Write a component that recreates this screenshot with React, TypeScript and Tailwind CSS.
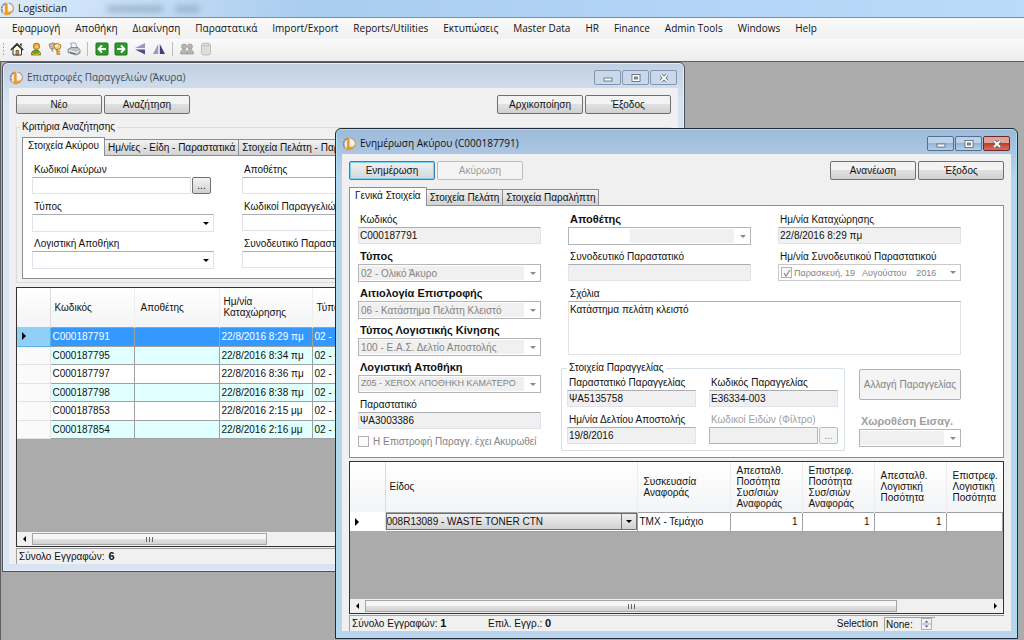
import type { ReactNode } from "react"
import clsx from "clsx"

const menuItems = [
  "Εφαρμογή",
  "Αποθήκη",
  "Διακίνηση",
  "Παραστατικά",
  "Import/Export",
  "Reports/Utilities",
  "Εκτυπώσεις",
  "Master Data",
  "HR",
  "Finance",
  "Admin Tools",
  "Windows",
  "Help",
]

const returns = [
  { code: "C000187791", date: "22/8/2016 8:29 πμ" },
  { code: "C000187795", date: "22/8/2016 8:34 πμ" },
  { code: "C000187797", date: "22/8/2016 8:36 πμ" },
  { code: "C000187798", date: "22/8/2016 8:38 πμ" },
  { code: "C000187853", date: "22/8/2016 2:15 μμ" },
  { code: "C000187854", date: "22/8/2016 2:16 μμ" },
]

function Logo() {
  return (
    <svg viewBox="0 0 14 14" className="h-3.5 w-3.5 shrink-0">
      <circle cx="7.5" cy="7" r="5.500" fill="#f4f1ee" />
      <path d="M4.500 2C1.500 3.600.8 8 3 11" fill="none" stroke="#85868e" strokeWidth="1.800" strokeDasharray="2.400 .7" />
      <path d="M8.500 1.200c4.400.2 6 4.800 4.200 8" fill="none" stroke="#b9a595" strokeWidth="1.300" />
      <path d="M4.300 1.200c1.700-.6 3 0 3 1.400v7.200c1.700.7 3.600.4 5.500-1.300-.7 3-3.600 5-7.600 4.300-.9-.1-1.500-.5-1.300-1 .9-.7 1.300-1.300 1.300-2.300V3.200c0-1-.3-1.500-.9-2z" fill="#f0a01e" stroke="#c9731a" strokeWidth=".4" />
    </svg>
  )
}

function Arrow({ muted }: { muted?: boolean }) {
  return (
    <svg viewBox="0 0 6 3" className={clsx("pointer-events-none mr-1 h-[3px] w-1.5 shrink-0", muted ? "fill-[#8a8a8a]" : "fill-black")}>
      <path d="M0 0h6L3 3z" />
    </svg>
  )
}

interface ButtonProps {
  children: ReactNode
  disabled?: boolean
  primary?: boolean
}

function Button({ children, disabled, primary }: ButtonProps) {
  return (
    <button
      disabled={disabled}
      className={clsx(
        "h-[19px] w-[86px] rounded-[2px] border text-center leading-none",
        disabled && "border-[#b9bdbf] bg-[#f4f4f4] text-[#9a9a9a]",
        primary && "border-[#3c7fb1] bg-linear-to-b from-[#f0f0f0] to-[#d3d8da] inset-ring inset-ring-[#7fd0ec]",
        !disabled && !primary && "border-[#707070] bg-linear-to-b from-[#f3f3f3] from-45% via-[#e0e0e0] via-50% to-[#d0d0d0]",
      )}
    >
      {children}
    </button>
  )
}

function WindowButtons({ active }: { active?: boolean }) {
  const base = clsx(
    "flex h-[15px] w-[27px] items-center justify-center rounded-[2px] border",
    active ? "border-[#55708f] bg-linear-to-b from-[#bcd2ea] from-45% via-[#94b4d6] via-50% to-[#b4d0ea]" : "border-[#8296b0] bg-[#c9d8ea]",
  )
  return (
    <div className="flex gap-px">
      <button aria-label="Minimize" className={base}>
        <svg viewBox="0 0 10 8" className="h-2 w-2.5">
          <rect x="1" y="4" width="8" height="3" fill="#fff" stroke="#56606e" strokeWidth=".8" />
        </svg>
      </button>
      <button aria-label="Maximize" className={base}>
        <svg viewBox="0 0 10 8" className="h-2 w-2.5">
          <rect x="1" y=".5" width="8" height="7" fill="#fff" stroke="#56606e" strokeWidth=".8" />
          <rect x="3.500" y="3" width="3" height="2" fill="#9ab" stroke="#56606e" strokeWidth=".8" />
        </svg>
      </button>
      <button
        aria-label="Close"
        className={active ? "flex h-[15px] w-[27px] items-center justify-center rounded-[2px] border border-[#6b2a2a] bg-linear-to-b from-[#e0a398] from-45% via-[#c23b28] via-50% to-[#d4705a]" : base}
      >
        <svg viewBox="0 0 10 8" className="h-2 w-2.5">
          <path d="M2 1l6 6M8 1L2 7" stroke="#56606e" strokeWidth="3.400" />
          <path d="M2 1l6 6M8 1L2 7" stroke="#fff" strokeWidth="1.900" />
        </svg>
      </button>
    </div>
  )
}

function Tabs({ tabs }: { tabs: string[] }) {
  return (
    <div role="tablist" className="flex h-[18px] items-end whitespace-nowrap">
      {tabs.map((tab, i) => (
        <button
          key={tab}
          role="tab"
          aria-selected={i === 0}
          className={clsx(
            "shrink-0 border border-[#8c8e94] leading-none",
            i === 0 ? "z-10 -mb-px h-[19px] border-b-0 bg-white px-[5px] pb-0.5" : "h-4 border-b-0 border-l-0 bg-linear-to-b from-[#f2f2f2] to-[#d2d2d2] px-[3px]",
          )}
        >
          {tab}
        </button>
      ))}
    </div>
  )
}

interface FieldProps {
  label: string
  value?: string
  bold?: boolean
  disabled?: boolean
  readOnly?: boolean
  compact?: boolean
  masked?: boolean
}

const labelText = "flex h-3.5 items-center pl-0.5 whitespace-nowrap"

function TextField({ label, value = "", disabled, readOnly }: FieldProps) {
  return (
    <label className="block h-[37px] min-w-0">
      <span className={clsx(labelText, disabled && "text-[#a0a0a0]")}>{label}</span>
      <input
        type="text"
        defaultValue={value}
        disabled={disabled}
        readOnly={readOnly}
        className={clsx(
          "mt-px block h-[17px] w-full border border-[#e2e3ea] border-t-[#abadb3] px-px",
          disabled || readOnly ? "bg-[#f0f0f0]" : "bg-white",
        )}
      />
    </label>
  )
}

function SelectField({ label, value = "", bold, disabled, compact, masked }: FieldProps) {
  return (
    <label className="block h-[37px] min-w-0">
      <span className={clsx(labelText, bold && "text-[11px] font-bold")}>{label}</span>
      <span className={clsx("mt-px flex h-[18px] items-center border bg-white", disabled ? "border-[#b5b5b5] text-[#838383]" : "border-[#e2e3ea] border-t-[#abadb3]")}>
        <select
          disabled={disabled}
          className={clsx(
            "mr-1.5 h-3.5 min-w-0 flex-1 appearance-none pl-0.5 whitespace-nowrap opacity-100",
            compact && "text-[9px]",
            masked && "bg-linear-to-r from-white from-[61px] to-[#f0f0f0] to-[61px]",
            disabled && !masked && "bg-[#f0f0f0]",
          )}
        >
          <option className="whitespace-nowrap">{value}</option>
        </select>
        <Arrow muted={disabled} />
      </span>
    </label>
  )
}

function PickerField({ label, disabled }: FieldProps) {
  return (
    <div className="h-[37px] min-w-0">
      <label htmlFor={label} className={clsx(labelText, disabled && "text-[#a0a0a0]")}>
        {label}
      </label>
      <div className={clsx("mt-px flex", !disabled && "pr-[3px]")}>
        <input id={label} disabled={disabled} className={clsx("h-[17px] min-w-0 flex-1 border px-px", disabled ? "border-[#b5b5b5] bg-[#f0f0f0]" : "border-[#e2e3ea] border-t-[#abadb3] bg-white")} />
        <button
          aria-label="Αναζήτηση κωδικών"
          disabled={disabled}
          className={clsx("ml-px h-[17px] w-[19px] rounded-[2px] border leading-none", disabled ? "border-[#b9bdbf] bg-[#f4f4f4] text-[#838383]" : "border-[#707070] bg-linear-to-b from-[#f3f3f3] to-[#d0d0d0]")}
        >
          ...
        </button>
      </div>
    </div>
  )
}

function CheckBox({ id, checked, label }: { id: string; checked?: boolean; label?: string }) {
  return (
    <span className="grid shrink-0 place-items-center">
      <input id={id} type="checkbox" aria-label={label} defaultChecked={checked} disabled className="col-start-1 row-start-1 h-[11px] w-[11px] appearance-none border border-[#b1b1b1] bg-[#fafafa]" />
      {checked && (
        <svg viewBox="0 0 8 8" className="col-start-1 row-start-1 h-2 w-2">
          <path d="M1 4l2 3 4-6" fill="none" stroke="#8a8a8a" strokeWidth="1.300" />
        </svg>
      )}
    </span>
  )
}

function ScrollBar({ children, right }: { children: ReactNode; right?: boolean }) {
  return (
    <div className="mt-auto flex h-[14px] items-center bg-[#f0f0f0]">
      <button aria-label="Scroll left" className="flex w-[15px] justify-center">
        <svg viewBox="0 0 3 6" className="h-1.5 w-[3px]">
          <path d="M3 0v6L0 3z" />
        </svg>
      </button>
      {children}
      {right && (
        <button aria-label="Scroll right" className="ml-auto flex w-[15px] justify-center">
          <svg viewBox="0 0 3 6" className="h-1.5 w-[3px]">
            <path d="M0 0v6l3-3z" />
          </svg>
        </button>
      )}
    </div>
  )
}

const thumb = "flex h-3 items-center justify-center border border-[#a5a5a5] bg-linear-to-b from-[#f5f5f5] from-45% via-[#e2e2e2] via-50% to-[#d2d2d2]"

function Grip() {
  return (
    <svg viewBox="0 0 7 5" className="h-[5px] w-[7px]">
      <path d="M.5 0v5M3.500 0v5M6.500 0v5" stroke="#666" />
    </svg>
  )
}

function RowMarker() {
  return (
    <svg viewBox="0 0 4 8" className="ml-[5px] h-2 w-1">
      <path d="M0 0v8l4-4z" />
    </svg>
  )
}

function Toolbar() {
  const button = "flex h-4 w-[19px] items-center justify-center"
  const icon = "h-3.5 w-3.5"
  return (
    <div className="flex h-[22px] shrink-0 items-center bg-linear-to-b from-[#fafafa] to-[#ededed] pb-0.5 pl-0.5">
      <svg viewBox="0 0 3 13" className="mr-0.5 h-[13px] w-[3px]">
        <path d="M1.500 0v13" stroke="#9a9a9a" strokeDasharray="1.500 2" />
      </svg>
      <button aria-label="Home" className={button}>
        <svg viewBox="0 0 14 14" className={icon}>
          <path d="M3 7v6h8.500V7L7 3z" fill="#fff8dd" stroke="#333" />
          <path d="M.8 8L7 1.800 13.200 8" fill="none" stroke="#333" strokeWidth="1.500" />
          <path d="M10 1.500h1.700v3.200L10 3z" fill="#333" />
          <path d="M6 8.500h2.600V13H6z" fill="#c8913b" stroke="#333" strokeWidth=".6" />
        </svg>
      </button>
      <button aria-label="User" className={button}>
        <svg viewBox="0 0 14 14" className={icon}>
          <path d="M2.500 13c-.5-3 1.500-5 4.500-5s5 2 4.500 5z" fill="#5b9f35" stroke="#3a7524" strokeWidth=".7" />
          <path d="M3 10c1 2.500 5 2.500 8.500-.5l.3 2c-3 2-7.500 2-9 0z" fill="#e6a323" />
          <circle cx="7.500" cy="4.300" r="3.200" fill="#eea52c" stroke="#a66715" strokeWidth=".8" />
          <circle cx="7.800" cy="4.800" r="1.500" fill="#f7cf77" />
        </svg>
      </button>
      <button aria-label="Keys" className={button}>
        <svg viewBox="0 0 14 14" className={icon}>
          <path d="M4 4.500l.5 5" stroke="#aaa08b" strokeWidth="2" />
          <path d="M8.500 5l1.200 8M10 9.500h2.200M10.200 12h2.200" stroke="#c78928" strokeWidth="1.700" />
          <path d="M1 2.500l4-1.700 3 1.500L7 6 2.500 6.500z" fill="#cbbf9f" stroke="#968b75" />
          <path d="M5.500 3l4-1.700 3.500 2-1 3.700-4.500.5z" fill="#f3d28a" stroke="#b57a22" />
          <circle cx="8" cy="4" r=".9" fill="#fff" />
        </svg>
      </button>
      <button aria-label="Print" className={button}>
        <svg viewBox="0 0 14 14" className={icon}>
          <path d="M3.500 1h5l2 5.500H5.200z" fill="#edf4fb" stroke="#8598ad" strokeWidth=".8" />
          <path d="M1 7.500l3-2h7l2 2.500v3L9.500 13 1 10.500z" fill="#bcc0c5" stroke="#74777c" strokeWidth=".8" />
          <path d="M2 8.500l7 2 3.500-2" fill="none" stroke="#f5f5f5" />
          <path d="M3 10.500l5.500 1.500" stroke="#4e5b69" />
        </svg>
      </button>
      <span className="mx-1 h-3.5 w-px bg-[#bcbcbc]" />
      <button aria-label="Back" className={button}>
        <svg viewBox="0 0 14 14" className={icon}>
          <rect x="1" y="1" width="12" height="12" rx="1" fill="#2f9a2c" stroke="#1c711b" />
          <path d="M11 7H4M7 3.500L3.500 7 7 10.500" fill="none" stroke="#fff" strokeWidth="1.800" />
        </svg>
      </button>
      <button aria-label="Forward" className={button}>
        <svg viewBox="0 0 14 14" className={icon}>
          <rect x="1" y="1" width="12" height="12" rx="1" fill="#2f9a2c" stroke="#1c711b" />
          <path d="M3 7h7M7 3.500L10.500 7 7 10.500" fill="none" stroke="#fff" strokeWidth="1.800" />
        </svg>
      </button>
      <button aria-label="Flip vertical" className={button}>
        <svg viewBox="0 0 14 14" className={icon}>
          <path d="M2 6l10-5v5z" fill="#9b97bd" />
          <path d="M2 7.500h10v5z" fill="#554a8d" />
        </svg>
      </button>
      <button aria-label="Flip horizontal" className={button}>
        <svg viewBox="0 0 14 14" className={icon}>
          <path d="M6.200 2v10H1z" fill="#9b97bd" />
          <path d="M7.800 2v10H13z" fill="#453b80" />
        </svg>
      </button>
      <span className="mx-1 h-3.5 w-px bg-[#bcbcbc]" />
      <button aria-label="Users" disabled className={button}>
        <svg viewBox="0 0 14 14" className={icon} fill="#b5b5b5" stroke="#959595" strokeWidth=".7">
          <circle cx="4" cy="4.500" r="2.500" />
          <circle cx="10" cy="4.500" r="2.500" />
          <path d="M.6 12c0-3 1-4.500 3.400-4.500S7 9 7 12zM7 12c0-3 1-4.500 3-4.500s3.500 1.500 3.500 4.500z" />
        </svg>
      </button>
      <button aria-label="Database" disabled className={button}>
        <svg viewBox="0 0 14 14" className={icon} fill="#dedede" stroke="#bdbdbd">
          <path d="M2.500 2.500v9c0 2 9 2 9 0v-9" />
          <ellipse cx="7" cy="2.500" rx="4.500" ry="1.500" />
        </svg>
      </button>
    </div>
  )
}

interface WindowProps {
  title: string
  active?: boolean
  className: string
  children: ReactNode
}

function Window({ title, active, className, children }: WindowProps) {
  return (
    <section
      className={clsx(
        "absolute flex flex-col rounded-t-md border px-1.5 pb-[7px] inset-ring",
        active ? "border-[#1f2b36] bg-linear-to-b from-[#9dbad9] to-[#bbd4ee] to-10% inset-ring-[#a8e2f2]" : "border-[#4b525b] bg-linear-to-b from-[#c1d0e1] to-[#d8e4f1] to-8% inset-ring-[#e6eef7]",
        className,
      )}
    >
      <header className="flex h-[25px] shrink-0 items-center gap-1 pt-1 pr-px font-['Open_Sans','Noto_Sans',sans-serif]">
        <Logo />
        <h2 className={clsx("flex-1", !active && "text-[#3f4f63]")}>{title}</h2>
        <WindowButtons active={active} />
      </header>
      <div className="flex min-h-0 flex-1 flex-col bg-[#f0f0f0] px-[7px] pt-[7px]">{children}</div>
    </section>
  )
}

function ReturnsWindow() {
  return (
    <Window title="Επιστροφές Παραγγελιών (Άκυρα)" className="top-0 left-px h-[510px] w-[683px]">
      <div className="flex gap-0.5">
        <Button>Νέο</Button>
        <Button>Αναζήτηση</Button>
        <span className="flex-1" />
        <Button>Αρχικοποίηση</Button>
        <Button>Έξοδος</Button>
      </div>

      <fieldset className="mt-1.5 h-[163px] min-w-0 border border-[#dcdcdc] px-[5px]">
        <legend className="-ml-0.5 px-0.5 leading-[14px]">Κριτήρια Αναζήτησης</legend>
        <div className="mt-[3px]">
          <Tabs tabs={["Στοιχεία Ακύρου", "Ημ/νίες - Είδη - Παραστατικά", "Στοιχεία Πελάτη - Παραλήπτη"]} />
        </div>
        <div className="grid h-[124px] grid-cols-[182px_182px] content-start gap-x-7 border border-[#8c8e94] bg-white px-[9px] pt-1.5">
          <PickerField label="Κωδικοί Ακύρων" />
          <TextField label="Αποθέτης" />
          <SelectField label="Τύπος" />
          <TextField label="Κωδικοί Παραγγελιών" />
          <SelectField label="Λογιστική Αποθήκη" />
          <TextField label="Συνοδευτικό Παραστατικό" />
        </div>
      </fieldset>

      <div className="mt-1 flex min-h-0 flex-1 flex-col overflow-hidden border border-[#333] bg-[#ababab]">
        <table className="w-full table-fixed border-collapse">
          <thead>
            <tr className="h-[39px] bg-linear-to-b from-white to-[#f3f4f6] text-left leading-[11px]">
              <th className="w-[33px] border-r border-[#ddd]" />
              <th className="w-[84px] border-r border-[#eee] pl-1 font-normal">Κωδικός</th>
              <th className="w-[85px] border-r border-[#eee] pl-1.5 font-normal">Αποθέτης</th>
              <th className="w-[93px] border-r border-[#eee] pl-1 font-normal">Ημ/νία Καταχώρησης</th>
              <th className="pl-1 font-normal">Τύπος</th>
            </tr>
          </thead>
          <tbody>
            {returns.map((row, i) => (
              <tr key={row.code} className={clsx("h-[19px] even:h-[18px]", i === 0 ? "bg-[#3399ff] text-white" : "bg-white even:bg-[#e0ffff]")}>
                <td className={clsx("border-r border-b p-0", i === 0 ? "border-[#5ab0e0] bg-[#8fd0f7]" : "border-[#e4e4e4] bg-[#fafafa]")}>{i === 0 && <RowMarker />}</td>
                <td className="border border-[#a0a0a0] px-0.5 py-0">{row.code}</td>
                <td className="border border-[#a0a0a0] p-0" />
                <td className="border border-[#a0a0a0] px-0.5 py-0 whitespace-nowrap">{row.date}</td>
                <td className="border border-[#a0a0a0] px-0.5 py-0">02 - Ολικό Άκυρο</td>
              </tr>
            ))}
          </tbody>
        </table>
        <ScrollBar>
          <span className={clsx(thumb, "w-[235px]")}>
            <Grip />
          </span>
        </ScrollBar>
      </div>
      <footer className="mt-px flex h-4 shrink-0 items-center gap-1 border-t border-l border-[#a0a0a0] pl-0.5">
        Σύνολο Εγγραφών: <b className="text-[11px]">6</b>
      </footer>
    </Window>
  )
}

function OrderFields() {
  return (
    <div className="flex items-start justify-between">
      <fieldset className="-ml-[7px] grid h-[90px] w-[284px] grid-cols-[129px_129px] content-start gap-x-[13px] rounded-xs border border-[#d5dfe5] px-[5px]">
        <legend className="px-0.5 leading-[14px]">Στοιχεία Παραγγελίας</legend>
        <TextField label="Παραστατικό Παραγγελίας" value="ΨΑ5135758" readOnly />
        <TextField label="Κωδικός Παραγγελίας" value="E36334-003" readOnly />
        <TextField label="Ημ/νία Δελτίου Αποστολής" value="19/8/2016" readOnly />
        <PickerField label="Κωδικοί Ειδών (Φίλτρο)" disabled />
      </fieldset>
      <div className="flex w-[102px] flex-col gap-3.5 pt-2">
        <button disabled className="h-[31px] rounded-[2px] border border-[#adb2b5] bg-[#f4f4f4] whitespace-nowrap text-[#838383]">
          Αλλαγή Παραγγελίας
        </button>
        <div className="text-[#a0a0a0]">
          <SelectField label="Χωροθέση Εισαγ." bold disabled />
        </div>
      </div>
    </div>
  )
}

function UpdateWindow() {
  const quantity = "border border-[#a0a0a0] px-1 py-0 text-right"
  return (
    <Window title="Ενημέρωση Ακύρου (C000187791)" active className="top-[66px] left-[334px] h-[511px] w-[683px]">
      <div className="flex gap-0.5">
        <Button primary>Ενημέρωση</Button>
        <Button disabled>Ακύρωση</Button>
        <span className="flex-1" />
        <Button>Ανανέωση</Button>
        <Button>Έξοδος</Button>
      </div>

      <div className="mt-[7px]">
        <Tabs tabs={["Γενικά Στοιχεία", "Στοιχεία Πελάτη", "Στοιχεία Παραλήπτη"]} />
      </div>
      <div className="grid h-[253px] shrink-0 grid-cols-[183px_393px] gap-x-[27px] border border-[#8c8e94] bg-white pt-1.5 pl-2">
        <div>
          <TextField label="Κωδικός" value="C000187791" readOnly />
          <SelectField label="Τύπος" value="02 - Ολικό Άκυρο" bold disabled />
          <SelectField label="Αιτιολογία Επιστροφής" value="06 - Κατάστημα Πελάτη Κλειστό" bold disabled />
          <SelectField label="Τύπος Λογιστικής Κίνησης" value="100 - Ε.Α.Σ. Δελτίο Αποστολής" bold disabled />
          <SelectField label="Λογιστική Αποθήκη" value="Z05 - XEROX ΑΠΟΘΗΚΗ ΚΑΜΑΤΕΡΟ" bold disabled compact />
          <TextField label="Παραστατικό" value="ΨΑ3003386" readOnly />
          <div className="flex items-center gap-1 text-[#838383]">
            <CheckBox id="cancelled" />
            <label htmlFor="cancelled" className="whitespace-nowrap">
              Η Επιστροφή Παραγγ. έχει Ακυρωθεί
            </label>
          </div>
        </div>
        <div>
          <div className="grid grid-cols-[183px_183px] gap-x-[27px]">
            <SelectField label="Αποθέτης" bold disabled masked />
            <TextField label="Ημ/νία Καταχώρησης" value="22/8/2016 8:29 πμ" readOnly />
            <TextField label="Συνοδευτικό Παραστατικό" readOnly />
            <div>
              <label htmlFor="doc-date" className={labelText}>
                Ημ/νία Συνοδευτικού Παραστατικού
              </label>
              <div className="mt-px flex h-[17px] items-center gap-0.5 border border-[#c8c8c8] bg-white pl-0.5 text-[#838383]">
                <CheckBox id="doc-date-set" label="Με ημερομηνία" checked />
                <input id="doc-date" disabled defaultValue="Παρασκευή, 19   Αυγούστου    2016" className="h-3.5 min-w-0 flex-1 text-[9px]" />
                <Arrow muted />
              </div>
            </div>
          </div>
          <label className="block h-[75px]">
            <span className={labelText}>Σχόλια</span>
            <textarea defaultValue="Κατάστημα πελάτη κλειστό" className="mt-px block h-[54px] w-full resize-none border border-[#e2e3ea] border-t-[#abadb3] px-px pt-0.5 leading-3" />
          </label>
          <OrderFields />
        </div>
      </div>

      <div className="mt-[3px] flex min-h-0 flex-1 flex-col overflow-hidden border border-[#333] bg-[#ababab]">
        <table className="w-full table-fixed border-collapse">
          <thead>
            <tr className="h-[50px] bg-linear-to-b from-white to-[#f3f4f6] text-left leading-[11px]">
              <th className="w-[35px] border-r border-[#ddd]" />
              <th className="w-[252px] border-r border-[#eee] pl-1 font-normal">Είδος</th>
              <th className="w-[93px] border-r border-[#eee] pr-4 pl-1.5 font-normal">Συσκευασία Αναφοράς</th>
              <th className="w-[72px] border-r border-[#eee] pr-4 pl-1.5 font-normal">Απεσταλθ. Ποσότητα Συσ/σιών Αναφοράς</th>
              <th className="w-[72px] border-r border-[#eee] pr-4 pl-1.5 font-normal">Επιστρεφ. Ποσότητα Συσ/σιών Αναφοράς</th>
              <th className="w-[72px] border-r border-[#eee] pr-4 pl-1.5 font-normal">Απεσταλθ. Λογιστική Ποσότητα</th>
              <th className="pl-1.5 font-normal">Επιστρεφ. Λογιστική Ποσότητα</th>
            </tr>
          </thead>
          <tbody>
            <tr className="h-[19px] bg-white">
              <td className="border-r border-[#ddd] p-0">
                <RowMarker />
              </td>
              <td className="border border-[#a0a0a0] p-0">
                <div className="flex h-[17px] items-center border border-[#707070] bg-linear-to-b from-[#f0f0f0] to-[#d2d2d2]">
                  <select aria-label="Είδος" className="min-w-0 flex-1 appearance-none">
                    <option>008R13089 - WASTE TONER CTN</option>
                  </select>
                  <span className="flex h-full items-center border-l border-[#707070] pl-1">
                    <Arrow />
                  </span>
                </div>
              </td>
              <td className="border border-[#a0a0a0] px-0.5 py-0">ΤΜΧ - Τεμάχιο</td>
              <td className={quantity}>1</td>
              <td className={quantity}>1</td>
              <td className={quantity}>1</td>
              <td className={quantity} />
            </tr>
          </tbody>
        </table>
        <ScrollBar right>
          <span className={clsx(thumb, "w-[532px]")}>
            <Grip />
          </span>
        </ScrollBar>
      </div>
      <footer className="mt-px flex h-4 shrink-0 items-center border-t border-l border-[#a0a0a0] pl-0.5">
        <span className="w-[136px]">
          Σύνολο Εγγραφών: <b className="text-[11px]">1</b>
        </span>
        <span>
          Επιλ. Εγγρ.: <b className="text-[11px]">0</b>
        </span>
        <label htmlFor="selection" className="ml-auto pr-1.5">
          Selection
        </label>
        <div className="mr-[69px] flex h-3.5 w-[51px] items-center border-t border-l border-[#a0a0a0]">
          <input id="selection" defaultValue="None:" className="w-9 px-px" />
          <svg viewBox="0 0 11 12" className="h-3 w-[11px]">
            <path d="M.5.5h10v11H.5zM.5 6h10" fill="#f4f4f4" stroke="#b0b0b0" />
            <path d="M3.500 4.500h4l-2-2zM3.500 7.500h4l-2 2z" fill="#3f5fa8" />
          </svg>
        </div>
      </footer>
    </Window>
  )
}

export default function App() {
  return (
    <div className="flex h-screen flex-col overflow-hidden bg-[#ababab] font-['Liberation_Sans',Arial,sans-serif] text-[10px] text-[#111]">
      {/* Title bar */}
      <header className="flex h-[18px] shrink-0 items-center gap-1 border-b border-[#7c8ea3] bg-linear-[100deg] from-[#dcebfa] via-[#a9cdef] via-30% to-[#badcfb] font-['Open_Sans','Noto_Sans',sans-serif]">
        <Logo />
        <h1>Logistician</h1>
        <span className="ml-9 h-1.5 w-14 bg-[#53708c]/40 blur-[3px]" />
        <span className="ml-2 h-1.5 w-6 bg-[#53708c]/40 blur-[3px]" />
      </header>

      {/* Menu */}
      <nav className="flex h-[21px] shrink-0 items-center gap-[15px] bg-linear-to-b from-[#f9f9f9] to-[#f1f1f1] pl-3 font-['Open_Sans','Noto_Sans',sans-serif] whitespace-nowrap">
        {menuItems.map((item) => (
          <button key={item}>{item}</button>
        ))}
      </nav>
      <Toolbar />

      {/* MDI workspace */}
      <main className="relative min-h-0 flex-1 overflow-hidden border-t border-l border-[#5f5f5f]">
        <ReturnsWindow />
        <UpdateWindow />
      </main>
    </div>
  )
}
